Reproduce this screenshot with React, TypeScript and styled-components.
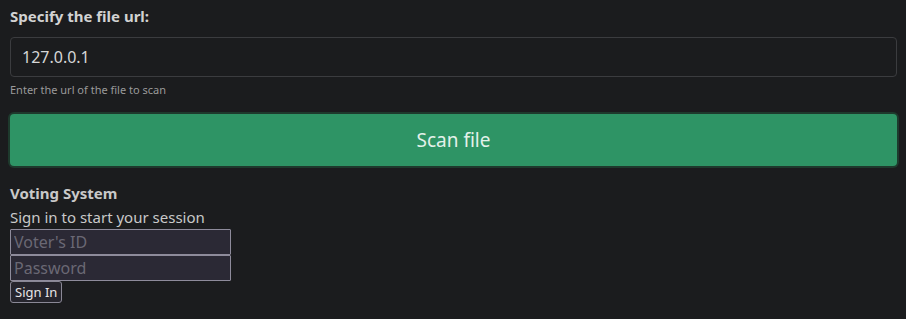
import React, { useState } from "react";
import styled, { createGlobalStyle } from "styled-components";

const GlobalStyle = createGlobalStyle`
	html, body {
		margin: 0;
		padding: 0;
		background: #1b1c1e;
	}
	body {
		font-family: "Noto Sans", "Open Sans", sans-serif;
		color: #cfcfcf;
	}
`;

const App: React.FunctionComponent = () => {
	const [url, setUrl] = useState("127.0.0.1");

	return (
		<>
			<GlobalStyle />
			<Page>
				<ScanForm onSubmit={(e) => e.preventDefault()}>
					<FieldLabel htmlFor="file-url">Specify the file url:</FieldLabel>
					<UrlInput
						id="file-url"
						value={url}
						onChange={(e) => setUrl(e.target.value)}
					/>
					<HelpText>Enter the url of the file to scan</HelpText>
					<ScanButton type="submit">Scan file</ScanButton>
				</ScanForm>

				<LoginBox>
					<Title>Voting System</Title>
					<Subtitle>Sign in to start your session</Subtitle>
					<LoginInput type="text" placeholder="Voter's ID" />
					<LoginInput type="password" placeholder="Password" />
					<SignInButton type="button">Sign In</SignInButton>
				</LoginBox>
			</Page>
		</>
	);
};

const Page = styled.div`
	display: flex;
	flex-direction: column;
	padding: 6px 9px 0 10px;
`;

const ScanForm = styled.form`
	display: flex;
	flex-direction: column;
`;

const FieldLabel = styled.label`
	font-size: 15px;
	font-weight: 700;
	line-height: 20px;
	color: #d2d2d2;
	margin-bottom: 11px;
`;

const UrlInput = styled.input`
	box-sizing: border-box;
	height: 40px;
	width: 100%;
	padding: 0 11px;
	background: #1b1c1e;
	border: 1px solid #3b3c3f;
	border-radius: 4px;
	color: #d6d6d6;
	font-family: inherit;
	font-size: 16px;
	outline: none;
`;

const HelpText = styled.div`
	font-size: 11px;
	line-height: 14px;
	color: #9a9a9a;
	margin-top: 6px;
`;

const ScanButton = styled.button`
	box-sizing: border-box;
	margin-top: 17px;
	height: 52px;
	width: 100%;
	border: none;
	border-radius: 4px;
	background: #2e9465;
	box-shadow: 0 0 0 2px #1e3a2d;
	color: #e3f1ea;
	font-family: inherit;
	font-size: 19px;
	cursor: pointer;
`;

const LoginBox = styled.div`
	display: flex;
	flex-direction: column;
	align-items: flex-start;
	margin-top: 17px;
`;

const Title = styled.div`
	font-size: 15px;
	font-weight: 700;
	line-height: 20px;
	color: #c9c9c9;
`;

const Subtitle = styled.div`
	font-size: 15px;
	line-height: 23px;
	margin-top: 3px;
	color: #c9c9c9;
`;

const LoginInput = styled.input`
	box-sizing: border-box;
	width: 221px;
	height: 26px;
	padding: 0 3px;
	background: #2b2935;
	border: 1px solid #8e8b9b;
	border-radius: 1px;
	color: #d0d0d0;
	font-family: inherit;
	font-size: 16px;
	outline: none;

	&::placeholder {
		color: #6a6874;
	}
`;

const SignInButton = styled.button`
	box-sizing: border-box;
	height: 22px;
	padding: 0 4px;
	background: #26252d;
	border: 1px solid #8a8896;
	border-radius: 3px;
	color: #e6e6e6;
	font-family: inherit;
	font-size: 13px;
	line-height: 18px;
`;

export default App;
